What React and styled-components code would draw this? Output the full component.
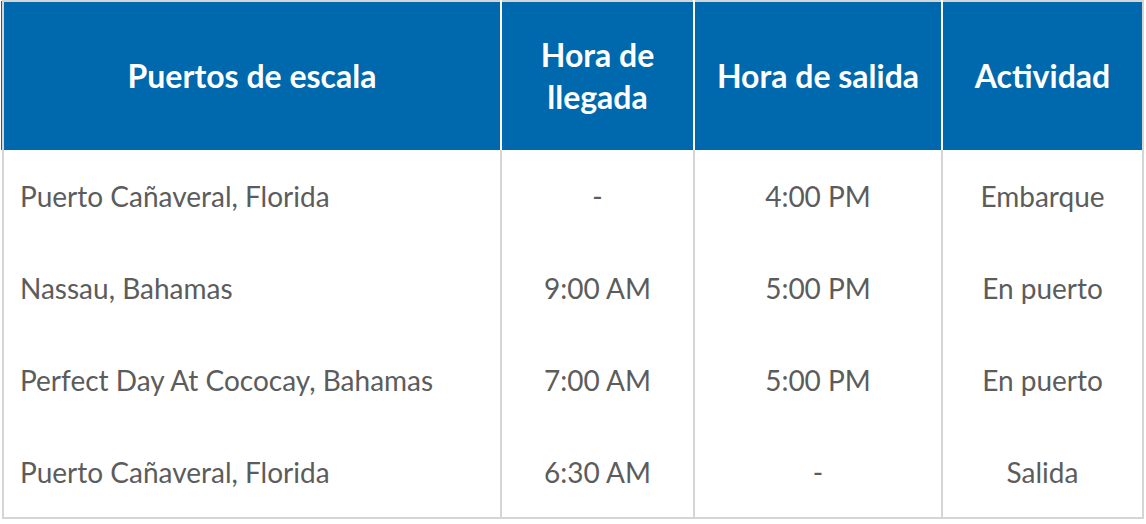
import styled, { createGlobalStyle } from "styled-components";

const GlobalStyle = createGlobalStyle`
  html, body {
    margin: 0;
    padding: 0;
    background: #ffffff;
  }
  body {
    font-family: Lato, "Open Sans", sans-serif;
  }
`;

const ports = [
  { name: "Puerto Cañaveral, Florida", arrival: "-", departure: "4:00 PM", activity: "Embarque" },
  { name: "Nassau, Bahamas", arrival: "9:00 AM", departure: "5:00 PM", activity: "En puerto" },
  { name: "Perfect Day At Cococay, Bahamas", arrival: "7:00 AM", departure: "5:00 PM", activity: "En puerto" },
  { name: "Puerto Cañaveral, Florida", arrival: "6:30 AM", departure: "-", activity: "Salida" },
];

export default function App() {
  return (
    <>
      <GlobalStyle />
      <Page>
        <Table>
          <colgroup>
            <col style={{ width: 498 }} />
            <col style={{ width: 193 }} />
            <col style={{ width: 248 }} />
            <col style={{ width: 201 }} />
          </colgroup>
          <thead>
            <tr>
              <HeadCell>Puertos de escala</HeadCell>
              <HeadCell>
                Hora de
                <br />
                llegada
              </HeadCell>
              <HeadCell>Hora de salida</HeadCell>
              <HeadCell>Actividad</HeadCell>
            </tr>
          </thead>
          <tbody>
            {ports.map((port, i) => (
              <tr key={i}>
                <Cell $align="left">{port.name}</Cell>
                <Cell>{port.arrival}</Cell>
                <Cell>{port.departure}</Cell>
                <Cell>{port.activity}</Cell>
              </tr>
            ))}
          </tbody>
        </Table>
      </Page>
    </>
  );
}

const Page = styled.div`
  width: 1146px;
  padding-left: 2px;
  box-sizing: border-box;
`;

const Table = styled.table`
  width: 1142px;
  table-layout: fixed;
  border-collapse: collapse;
  border: 2px solid #d5d5d5;
`;

const HeadCell = styled.th`
  height: 149px;
  padding: 0 8px;
  box-sizing: border-box;
  background: #0068ad;
  color: #ffffff;
  font-size: 32px;
  font-weight: 700;
  line-height: 42px;
  text-align: center;
  vertical-align: middle;
  border-left: 2px solid #ffffff;
  border-right: 2px solid #ffffff;
  border-top: none;
  border-bottom: none;
  white-space: nowrap;

  &:first-child {
    border-left: none;
    box-shadow: -2px 0 0 #0068ad;
  }
  &:last-child {
    border-right: none;
  }
`;

const Cell = styled.td`
  height: 92px;
  padding: 0 16px;
  box-sizing: border-box;
  color: #5c5c5c;
  font-size: 28px;
  font-weight: 400;
  text-align: ${(p) => p.$align || "center"};
  vertical-align: middle;
  border-left: 2px solid #d5d5d5;
  border-right: 2px solid #d5d5d5;
  white-space: nowrap;
`;
